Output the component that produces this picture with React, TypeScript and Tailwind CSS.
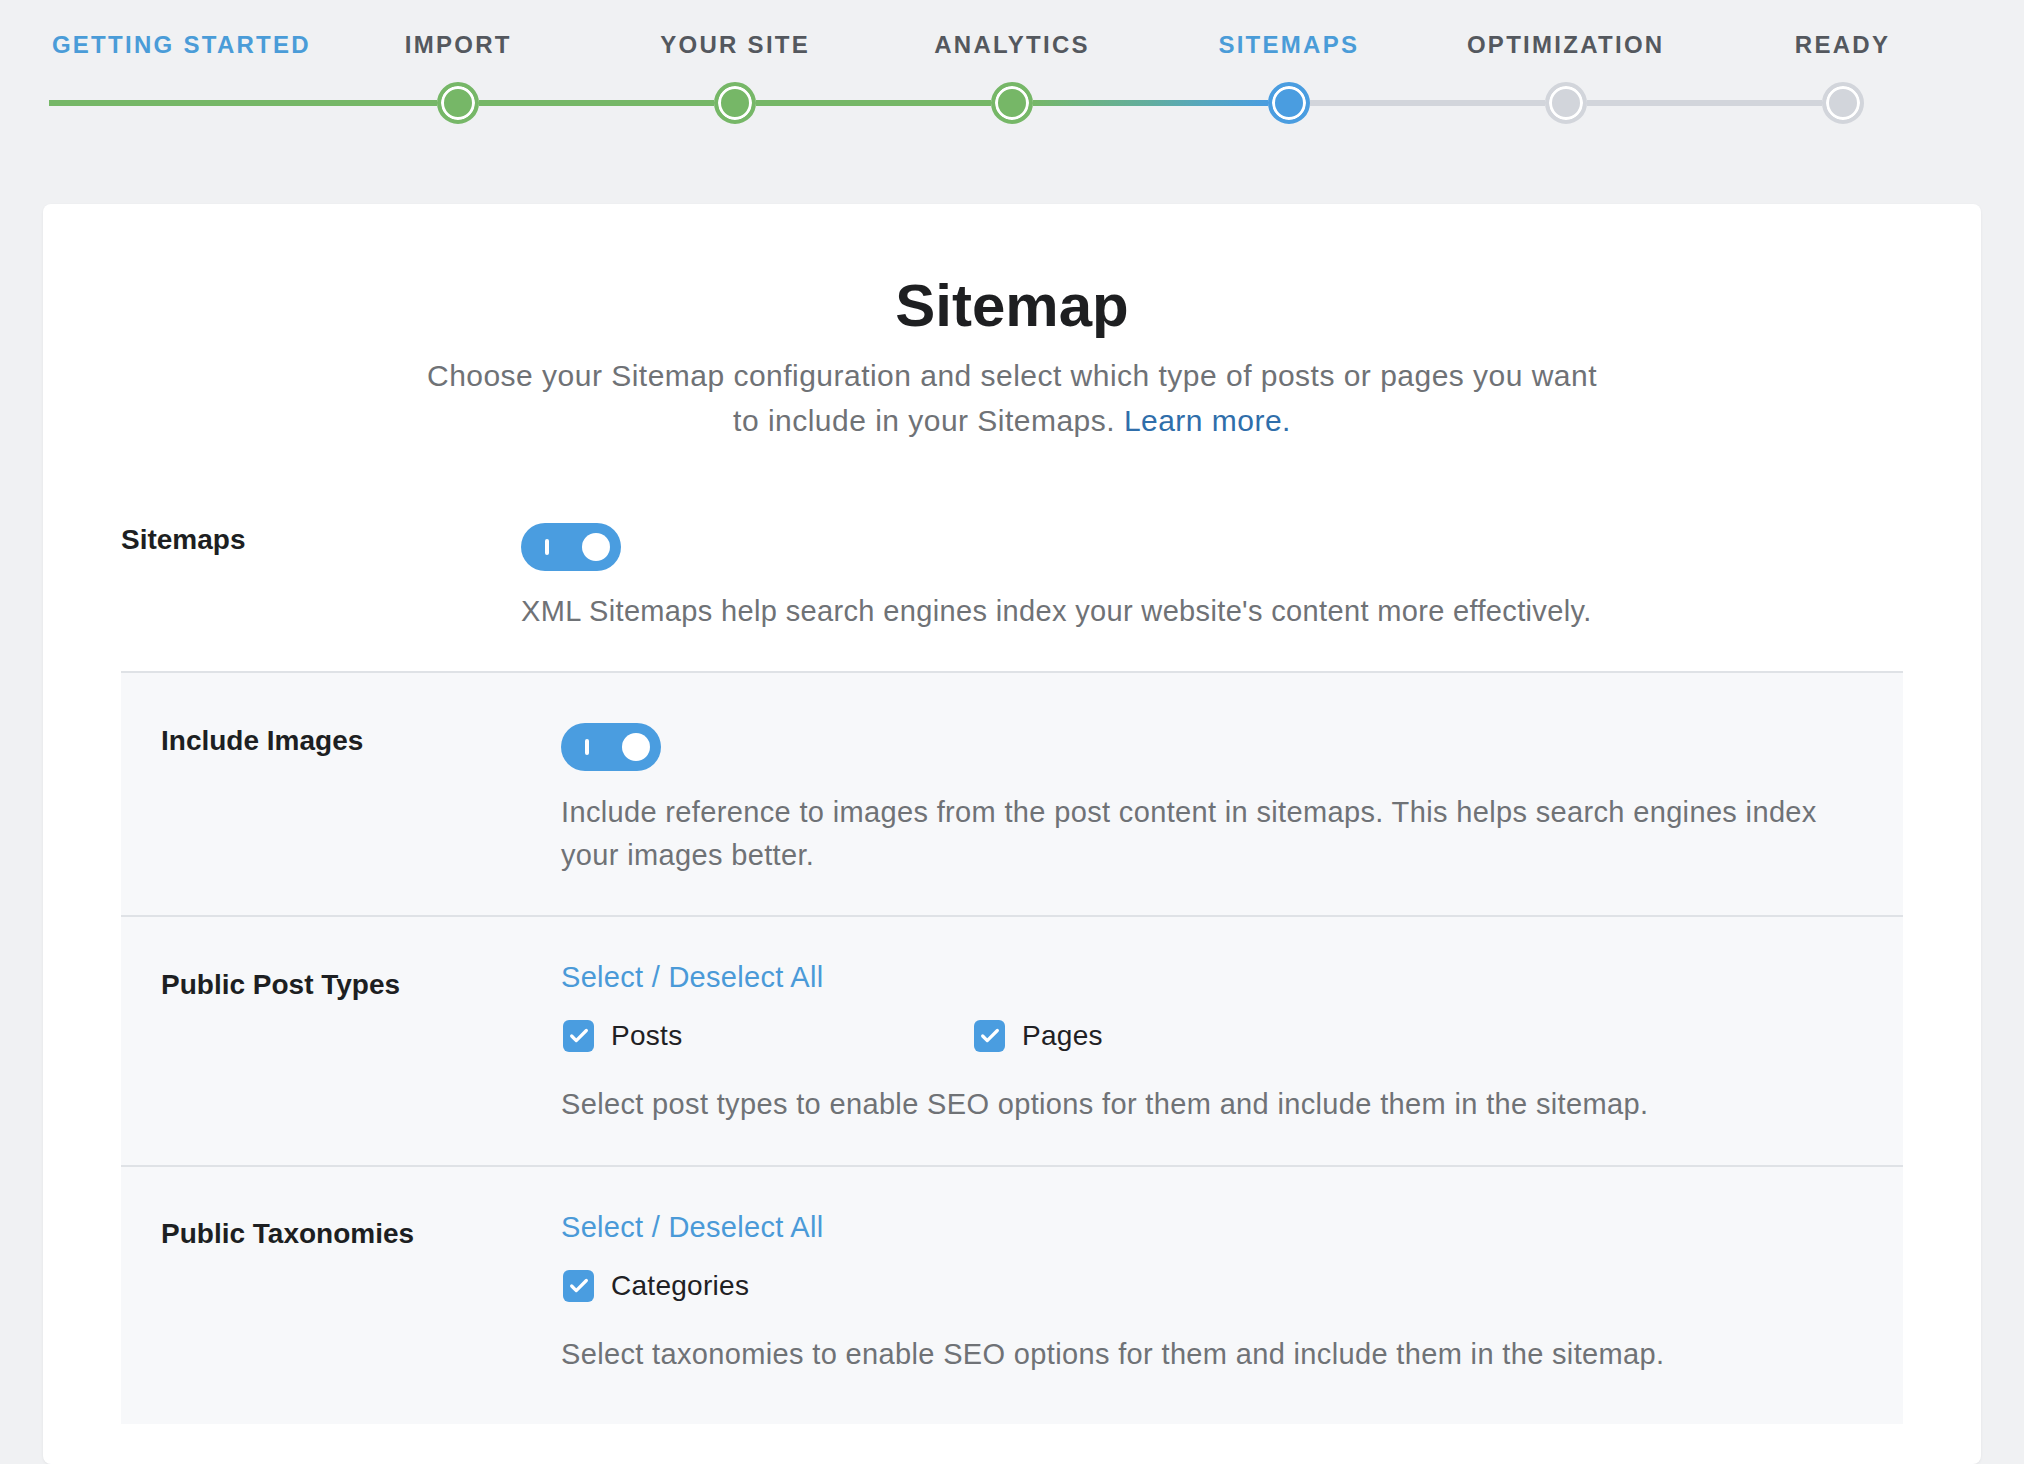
import { Check } from "lucide-react";

type StepState = "done" | "current" | "todo";

const steps: { label: string; state: StepState }[] = [
    { label: "GETTING STARTED", state: "done" },
    { label: "IMPORT", state: "done" },
    { label: "YOUR SITE", state: "done" },
    { label: "ANALYTICS", state: "done" },
    { label: "SITEMAPS", state: "current" },
    { label: "OPTIMIZATION", state: "todo" },
    { label: "READY", state: "todo" },
];

const lineColor: Record<StepState, string> = {
    done: "bg-[#76b767]",
    current: "bg-[#4a9de0]",
    todo: "bg-[#d2d5db]",
};

const circleColor: Record<StepState, string> = {
    done: "bg-[#76b767] border-[#76b767]",
    current: "bg-[#4a9de0] border-[#4a9de0]",
    todo: "bg-[#d2d5db] border-[#d2d5db]",
};

function Stepper() {
    return (
        <div className="pt-[29px]">
            <div className="grid grid-cols-7">
                {steps.map((step, i) => (
                    <div
                        key={step.label}
                        className={`text-center text-[24px] font-bold leading-[32px] tracking-[0.095em] ${
                            i === 0 || step.state === "current" ? "text-[#4a9cd8]" : "text-[#54585e]"
                        }`}
                    >
                        {step.label}
                    </div>
                ))}
            </div>
            <div className="mt-[21px] grid grid-cols-7">
                {steps.map((step, i) => {
                    const next = steps[i + 1];
                    let leftLine = lineColor[step.state];
                    if (step.state === "current") leftLine = "bg-linear-to-r from-[#62ad9e] to-[#4a9de0]";
                    let rightLine = next ? lineColor[next.state === "current" ? "done" : next.state] : "bg-transparent";
                    if (next && next.state === "current") rightLine = "bg-linear-to-r from-[#76b767] to-[#62ad9e]";
                    if (step.state === "current") rightLine = lineColor.todo;
                    if (i === 0) {
                        return (
                            <div key={step.label} className="flex h-[42px] items-center pl-[6px]">
                                <div className={`h-[6px] flex-1 ${lineColor.done}`} />
                            </div>
                        );
                    }
                    return (
                        <div key={step.label} className="flex h-[42px] items-center">
                            <div className={`h-[6px] flex-1 ${leftLine}`} />
                            <div
                                className={`h-[42px] w-[42px] shrink-0 rounded-full border-[4px] shadow-[inset_0_0_0_3px_#ffffff] ${circleColor[step.state]}`}
                            />
                            <div className={`h-[6px] flex-1 ${rightLine}`} />
                        </div>
                    );
                })}
            </div>
        </div>
    );
}

function Toggle() {
    return (
        <div className="flex h-[48px] w-[100px] items-center rounded-full bg-[#4a9de0] pl-[24px] pr-[11px]">
            <div className="h-[16px] w-[4px] rounded-sm bg-white" />
            <div className="ml-auto h-[28px] w-[28px] rounded-full bg-white" />
        </div>
    );
}

function CheckBox({ label }: { label: string }) {
    return (
        <div className="flex h-[36px] w-[411px] items-center">
            <div className="ml-[2px] flex h-[32px] w-[31px] items-center justify-center rounded-[6px] bg-[#4a9de0]">
                <Check className="h-[22px] w-[22px] text-white" strokeWidth={3.5} />
            </div>
            <span className="ml-[17px] text-[28px] leading-[36px] tracking-[0.01em] text-[#1f2124]">{label}</span>
        </div>
    );
}

function Desc({ children }: { children: React.ReactNode }) {
    return <p className="text-[29px] leading-[43px] tracking-[0.012em] text-[#6f7276]">{children}</p>;
}

function SelectAll() {
    return <div className="text-[29px] leading-[36px] tracking-[0.01em] text-[#4a9ad8]">Select / Deselect All</div>;
}

function Label({ children, className = "" }: { children: React.ReactNode; className?: string }) {
    return (
        <div className={`w-[400px] shrink-0 text-[28px] font-bold leading-[36px] text-[#1d1f22] ${className}`}>
            {children}
        </div>
    );
}

export default function App() {
    return (
        <div className="min-h-screen bg-[#f0f1f3] font-['Liberation_Sans',Arial,sans-serif]">
            <div className="mx-[43px]">
                <Stepper />

                <div className="mt-[80px] rounded-[8px] bg-white px-[78px] pb-[40px] pt-[66px] shadow-[0_1px_3px_rgba(0,0,0,0.06)]">
                    <h1 className="text-center text-[60px] font-bold leading-[72px] text-[#1e1f21]">Sitemap</h1>
                    <p className="mt-[11px] text-center text-[30px] leading-[45px] tracking-[0.016em] text-[#6f7276]">
                        Choose your Sitemap configuration and select which type of posts or pages you want
                        <br />
                        to include in your Sitemaps. <span className="text-[#2f6eaa]">Learn more.</span>
                    </p>

                    <div className="mt-[79px] flex pb-[38px]">
                        <Label>Sitemaps</Label>
                        <div className="flex-1">
                            <div className="mt-px">
                                <Toggle />
                            </div>
                            <div className="mt-[19px]">
                                <Desc>XML Sitemaps help search engines index your website's content more effectively.</Desc>
                            </div>
                        </div>
                    </div>

                    <div className="bg-[#f7f8fa]">
                        <div className="flex border-t-2 border-[#dfe2e6] px-[40px] pb-[38px] pt-[50px]">
                            <Label>Include Images</Label>
                            <div className="flex-1">
                                <Toggle />
                                <div className="mt-[20px]">
                                    <Desc>
                                        Include reference to images from the post content in sitemaps. This helps search
                                        engines index your images better.
                                    </Desc>
                                </div>
                            </div>
                        </div>

                        <div className="flex border-t-2 border-[#dfe2e6] px-[40px] pb-[39px] pt-[42px]">
                            <Label className="mt-[8px]">Public Post Types</Label>
                            <div className="flex-1">
                                <SelectAll />
                                <div className="mt-[23px] flex">
                                    <CheckBox label="Posts" />
                                    <CheckBox label="Pages" />
                                </div>
                                <div className="mt-[29px]">
                                    <Desc>Select post types to enable SEO options for them and include them in the sitemap.</Desc>
                                </div>
                            </div>
                        </div>

                        <div className="flex border-t-2 border-[#dfe2e6] px-[40px] pb-[48px] pt-[42px]">
                            <Label className="mt-[7px]">Public Taxonomies</Label>
                            <div className="flex-1">
                                <SelectAll />
                                <div className="mt-[23px] flex">
                                    <CheckBox label="Categories" />
                                </div>
                                <div className="mt-[29px]">
                                    <Desc>Select taxonomies to enable SEO options for them and include them in the sitemap.</Desc>
                                </div>
                            </div>
                        </div>
                    </div>
                </div>
            </div>
        </div>
    );
}
